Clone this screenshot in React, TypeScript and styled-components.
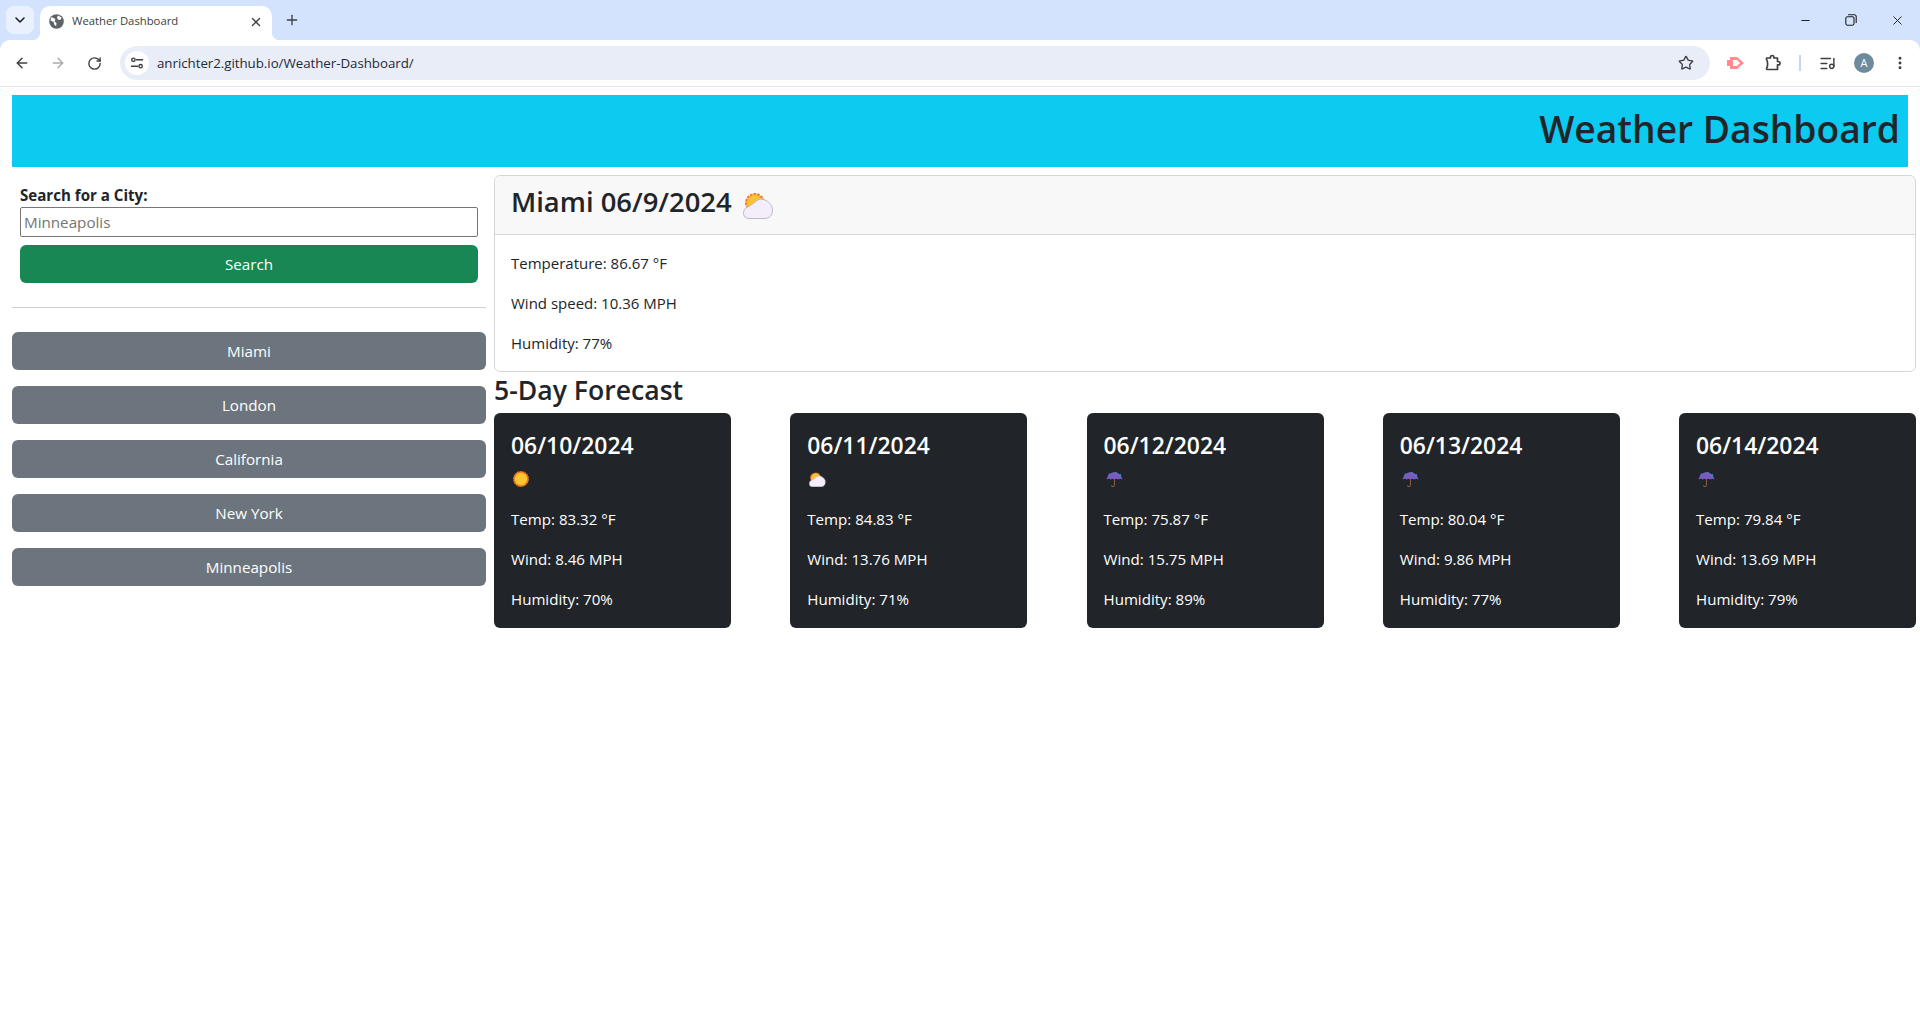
import React from "react";
import styled, { createGlobalStyle } from "styled-components";
import { ArrowLeft, ArrowRight, RotateCw, Star, X, Plus, ChevronDown, Minus, ListMusic, EllipsisVertical } from "lucide-react";

const FONT = `"Open Sans", "Noto Sans", sans-serif`;

const Global = createGlobalStyle`
  html, body { margin: 0; padding: 0; background: #fff; }
  body { font-family: ${FONT}; color: #212529; font-size: 16px; line-height: 1.5; height: 1032px; overflow: hidden; }
  * { box-sizing: border-box; }
`;

const Strip = styled.div`
  height: 40px; background: #d3e3fd; display: flex; align-items: flex-end; padding-left: 6px; position: relative;
`;
const TabMenu = styled.div`
  width: 28px; height: 28px; margin-bottom: 6px; border-radius: 8px; background: #e9f1fe; display: flex; align-items: center; justify-content: center; color: #1f1f1f;
`;
const Tab = styled.div`
  width: 232px; height: 34px; margin-left: 6px; background: #fff; border-radius: 10px 10px 0 0; display: flex; align-items: center; padding: 0 9px 3px 9px; font-size: 11.3px; color: #3c4043; position: relative;
  &::before, &::after { content: ""; position: absolute; bottom: 0; width: 8px; height: 8px; background: radial-gradient(circle at 0 0, transparent 8px, #fff 8.5px); }
  &::before { left: -8px; }
  &::after { right: -8px; transform: scaleX(-1); }
`;
const TabTitle = styled.span`
  flex: 1; margin-left: 8px; white-space: nowrap;
`;
const NewTab = styled.div`
  margin: 0 0 6px 6px; width: 28px; height: 28px; display: flex; align-items: center; justify-content: center; color: #3c4043;
`;
const WindowControls = styled.div`
  margin-left: auto; display: flex; align-items: center; height: 40px; color: #1f1f1f; align-self: flex-start;
`;
const WinBtn = styled.div`
  width: 46px; height: 40px; display: flex; align-items: center; justify-content: center;
`;
const Toolbar = styled.div`
  height: 47px; background: #fff; border-radius: 10px 10px 0 0; border-bottom: 1px solid #e1e3e6; display: flex; align-items: center; padding: 0 6px 0 4px; position: relative;
`;
const ToolBg = styled.div`
  background: #d3e3fd;
`;
const NavBtn = styled.div<{ $dim?: boolean }>`
  width: 36px; height: 34px; flex: none; display: flex; align-items: center; justify-content: center; color: ${p => (p.$dim ? "#a8abaf" : "#3c4043")};
`;
const Omnibox = styled.div`
  width: 1590px; height: 34px; flex: none; margin-left: 8px; border-radius: 17px; background: #e9edf7; display: flex; align-items: center; padding: 0 16px 0 5px;
`;
const TuneBadge = styled.div`
  width: 24px; height: 24px; border-radius: 50%; background: #fff; display: flex; align-items: center; justify-content: center; flex: none;
`;
const Url = styled.span`
  margin-left: 8px; padding-top: 1px; font-size: 13.3px; color: #1f2a3a; flex: 1; white-space: nowrap; letter-spacing: -0.03px;
`;
const ToolIcons = styled.div`
  display: flex; align-items: center; margin-left: 6px; color: #3c4043; flex: 1; min-width: 0;
`;
const ToolIcon = styled.div<{ $w?: number }>`
  width: ${p => p.$w ?? 37}px; display: flex; align-items: center; justify-content: center; flex: none;
`;
const ToolDivider = styled.div`
  width: 1.5px; height: 16px; background: #c6d6f3; flex: none;
`;
const Avatar = styled.div`
  width: 20px; height: 20px; border-radius: 50%; background: #6d8b9c; color: #fff; font-size: 11px; display: flex; align-items: center; justify-content: center; flex: none; margin: 0 8px 0 10px;
`;

const Page = styled.div`
  padding-top: 8px;
`;
const Banner = styled.header`
  width: 1896px; height: 72px; margin-left: 12px; background: #0dcaf0; display: flex; align-items: center; justify-content: flex-end; padding: 0 8px 4px 0;
`;
const BannerTitle = styled.h1`
  margin: 0; font-size: 37.2px; font-weight: 600; line-height: 1.2; color: #212529; white-space: nowrap;
`;
const Columns = styled.div`
  display: flex; padding: 8px 4px 0 12px; gap: 8px;
`;
const Sidebar = styled.aside`
  width: 474px; flex: none;
`;
const SearchForm = styled.form`
  padding: 10px 8px 0; display: flex; flex-direction: column;
`;
const Label = styled.label`
  font-weight: 700; font-size: 15.1px; line-height: 20px; color: #212529;
`;
const Input = styled.input`
  height: 30px; width: 100%; margin-top: 2px; border: 1px solid #767676; border-radius: 2px; padding: 0 3px; font: 15.2px ${FONT}; color: #212529; background: #fff; outline: none;
  &::placeholder { color: #757575; opacity: 1; }
`;
const Btn = styled.button<{ $variant: "green" | "grey" }>`
  height: 38px; width: 100%; border: 0; border-radius: 6px; color: #fff; font: 15.2px/24px ${FONT}; padding: 0;
  background: ${p => (p.$variant === "green" ? "#198754" : "#6c757d")};
`;
const SearchBtn = styled(Btn)`
  margin-top: 8px;
`;
const Rule = styled.hr`
  height: 1px; border: 0; background: #cfd0d1; margin: 24px 0;
`;
const CityList = styled.div`
  display: flex; flex-direction: column; gap: 16px;
`;
const Main = styled.main`
  flex: 1; min-width: 0;
`;
const CurrentCard = styled.section`
  border: 1px solid #d5d6d7; border-radius: 6px; overflow: hidden; background: #fff;
`;
const CurrentHead = styled.div`
  height: 59px; background: #f8f8f8; border-bottom: 1px solid #d5d6d7; display: flex; align-items: center; padding: 0 16px 5px;
`;
const CurrentTitle = styled.h2`
  margin: 0; font-size: 27.4px; font-weight: 600; line-height: 1.2; white-space: nowrap;
`;
const CurrentBody = styled.div`
  padding: 16px 16px 0;
`;
const Stat = styled.p`
  margin: 0 0 16px; font-size: 15px; line-height: 24px;
`;
const ForecastTitle = styled.h3`
  margin: 0; padding-top: 1px; font-size: 26.6px; font-weight: 600; line-height: 34px; height: 41px;
`;
const Cards = styled.div`
  display: flex; justify-content: space-between;
`;
const DayCard = styled.article`
  width: 237px; height: 215px; background: #212529; color: #fff; border-radius: 6px; padding: 19px 17px 0;
`;
const DayDate = styled.h4`
  margin: 0; font-size: 22.9px; font-weight: 600; line-height: 28.8px; white-space: nowrap;
`;
const IconSlot = styled.div`
  height: 35px; margin: 1px 0 10px; padding-left: 2px; display: flex; align-items: center;
`;
const DayStat = styled.p`
  margin: 0 0 16px; font-size: 15.1px; line-height: 24px; white-space: nowrap;
`;
const IconGap = styled.span`
  margin-left: 11px; display: inline-flex; margin-top: 5px;
`;

const Sun = () => (
  <svg width="16" height="16" viewBox="0 0 20 20">
    <circle cx="10" cy="10" r="8.7" fill="#fdc52e" stroke="#f47a24" strokeWidth="2.4" strokeDasharray="2.4 0.6" />
  </svg>
);
const Cloudy = ({ height }: { height: number }) => (
  <svg width={(height * 30) / 27} height={height} viewBox="0 0 30 27">
    <circle cx="12" cy="11" r="9" fill="#fdc133" stroke="#f4792b" strokeWidth="2" strokeDasharray="2.6 1.1" />
    <path d="M6 26.5C2.5 26.5.5 24 .5 21c0-3.6 2.5-6 5.5-6.5L14 8.5c3-2 6-1.5 9 0 4 2 6.5 5.5 6.5 9.5 0 5.500-3.500 8.500-7.500 8.500z" fill="#f3eef9" stroke="#b7b3c4" strokeWidth="0.9" />
  </svg>
);
const Umbrella = () => (
  <svg width="17" height="17" viewBox="0 0 17 17">
    <path d="M8.500 8v6c0 2-3 2-3 .4" fill="none" stroke="#8a5a3a" strokeWidth="1.1" />
    <path d="M.5 8.500C1.500 3.800 5 1.200 8.500 1.200s7 2.600 8 7.300C15 7.400 13.500 7.400 12.300 8.500 11 7.400 9.700 7.400 8.500 8.500 7.300 7.400 6 7.400 4.700 8.500 3.500 7.400 2 7.400.5 8.500z" fill="#7a5bbf" />
    <circle cx="3.400" cy="3.400" r="1" fill="#1f9bd6" />
    <circle cx="9.800" cy="1.600" r="0.9" fill="#1f9bd6" />
    <circle cx="14.200" cy="4" r="1" fill="#1f9bd6" />
  </svg>
);
const Globe = () => (
  <svg width="15" height="15" viewBox="0 0 16 16">
    <circle cx="8" cy="8" r="7.8" fill="#5f6368" />
    <path d="M2.800 3.200 6.800 5.400 6 8l2 1.600-.4 3.500-2-2-.6-2.600L1.600 7A6.500 6.500 0 0 1 2.800 3.200zM9.500 1.500l3.800 2.300-.9 2.200-2.800.2-1-2.400z" fill="#fff" />
  </svg>
);
const Tune = () => (
  <svg width="14" height="14" viewBox="0 0 14 14" fill="none" stroke="#3c4043" strokeWidth="1.4">
    <circle cx="3.400" cy="3.800" r="1.700" />
    <path d="M6 3.800h7M1 10.200h7" />
    <circle cx="10.600" cy="10.200" r="1.700" />
  </svg>
);
const RedExt = () => (
  <svg width="18" height="14" viewBox="0 0 18 14">
    <path d="M0 4h3V1h7l7 6-7 6H3v-3H0z" fill="#ff8a8f" />
    <path d="M6 4h4l3 3-3 3H6z" fill="#fff" />
  </svg>
);
const ExtensionPiece = () => (
  <svg width="18" height="18" viewBox="0 0 18 18" fill="none" stroke="#3c4043" strokeWidth="1.700" strokeLinejoin="round">
    <path d="M2.500 4H6.500V3.200a1.700 1.700 0 0 1 3.400 0V4H13.500V7.500h.8a1.700 1.700 0 0 1 0 3.400h-.8V15.500H3.500C2.900 15.500 2.500 15.100 2.500 14.500C4 13 4 7 2.500 5.500z" />
  </svg>
);
const Restore = () => (
  <svg width="12" height="12" viewBox="0 0 12 12" fill="none" stroke="#1f1f1f" strokeWidth="1.100">
    <rect x="0.800" y="2.800" width="8.200" height="8.400" rx="1.600" />
    <path d="M3 .8h6.400a1.800 1.800 0 0 1 1.800 1.800V9" />
  </svg>
);

const days = [
  { date: "06/10/2024", icon: <Sun />, temp: "83.32", wind: "8.46", hum: "70" },
  { date: "06/11/2024", icon: <Cloudy height={15} />, temp: "84.83", wind: "13.76", hum: "71" },
  { date: "06/12/2024", icon: <Umbrella />, temp: "75.87", wind: "15.75", hum: "89" },
  { date: "06/13/2024", icon: <Umbrella />, temp: "80.04", wind: "9.86", hum: "77" },
  { date: "06/14/2024", icon: <Umbrella />, temp: "79.84", wind: "13.69", hum: "79" },
];
const cities = ["Miami", "London", "California", "New York", "Minneapolis"];

export default function App() {
  return (
    <>
      <Global />
      <Strip>
        <TabMenu><ChevronDown size={16} strokeWidth={2.4} /></TabMenu>
        <Tab>
          <Globe />
          <TabTitle>Weather Dashboard</TabTitle>
          <X size={14} strokeWidth={2.4} color="#3c4043" />
        </Tab>
        <NewTab><Plus size={16} strokeWidth={2} /></NewTab>
        <WindowControls>
          <WinBtn><Minus size={13} strokeWidth={1.8} /></WinBtn>
          <WinBtn><Restore /></WinBtn>
          <WinBtn><X size={15} strokeWidth={1.500} /></WinBtn>
        </WindowControls>
      </Strip>
      <ToolBg>
        <Toolbar>
          <NavBtn><ArrowLeft size={16} strokeWidth={2.2} /></NavBtn>
          <NavBtn $dim><ArrowRight size={16} strokeWidth={2.2} /></NavBtn>
          <NavBtn><RotateCw size={15} strokeWidth={2.2} /></NavBtn>
          <Omnibox>
            <TuneBadge><Tune /></TuneBadge>
            <Url>anrichter2.github.io/Weather-Dashboard/</Url>
            <Star size={16} strokeWidth={2} color="#3c4043" />
          </Omnibox>
          <ToolIcons>
            <ToolIcon $w={40}><RedExt /></ToolIcon>
            <ToolIcon $w={34}><ExtensionPiece /></ToolIcon>
            <ToolIcon $w={20}><ToolDivider /></ToolIcon>
            <ToolIcon $w={34}><ListMusic size={17} strokeWidth={2} /></ToolIcon>
            <Avatar>A</Avatar>
            <ToolIcon $w={36}><EllipsisVertical size={16} strokeWidth={2.4} /></ToolIcon>
          </ToolIcons>
        </Toolbar>
      </ToolBg>
      <Page>
        <Banner><BannerTitle>Weather Dashboard</BannerTitle></Banner>
        <Columns>
          <Sidebar>
            <SearchForm onSubmit={e => e.preventDefault()}>
              <Label htmlFor="city">Search for a City:</Label>
              <Input id="city" placeholder="Minneapolis" />
              <SearchBtn $variant="green" type="button">Search</SearchBtn>
            </SearchForm>
            <Rule />
            <CityList>
              {cities.map(c => <Btn key={c} $variant="grey" type="button">{c}</Btn>)}
            </CityList>
          </Sidebar>
          <Main>
            <CurrentCard>
              <CurrentHead>
                <CurrentTitle>Miami 06/9/2024</CurrentTitle>
                <IconGap><Cloudy height={27} /></IconGap>
              </CurrentHead>
              <CurrentBody>
                <Stat>Temperature: 86.67 °F</Stat>
                <Stat>Wind speed: 10.36 MPH</Stat>
                <Stat>Humidity: 77%</Stat>
              </CurrentBody>
            </CurrentCard>
            <ForecastTitle>5-Day Forecast</ForecastTitle>
            <Cards>
              {days.map(d => (
                <DayCard key={d.date}>
                  <DayDate>{d.date}</DayDate>
                  <IconSlot>{d.icon}</IconSlot>
                  <DayStat>Temp: {d.temp} °F</DayStat>
                  <DayStat>Wind: {d.wind} MPH</DayStat>
                  <DayStat>Humidity: {d.hum}%</DayStat>
                </DayCard>
              ))}
            </Cards>
          </Main>
        </Columns>
      </Page>
    </>
  );
}
